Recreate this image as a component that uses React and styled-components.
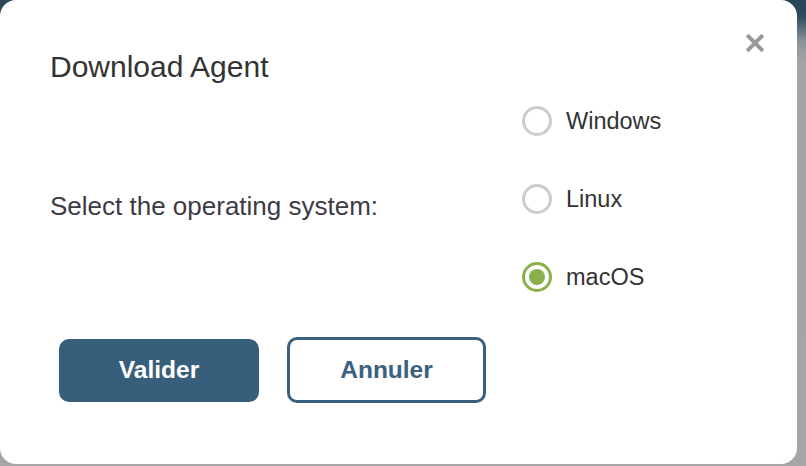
import React, { useState } from "react";
import styled, { createGlobalStyle } from "styled-components";

const Global = createGlobalStyle`
  html, body {
    margin: 0;
    padding: 0;
  }
  body {
    width: 806px;
    height: 466px;
    overflow: hidden;
    font-family: "Liberation Sans", Helvetica, Arial, sans-serif;
    background: linear-gradient(to bottom, #2a4558 0px, #2e4b5f 16px, #8b959c 42px, #a4a4a4 62px, #a5a5a5 100%);
  }
`;

const Modal = styled.div`
  position: relative;
  box-sizing: border-box;
  width: 797px;
  height: 464px;
  background: #ffffff;
  border-radius: 16px;
  padding: 50px 50px 0 50px;
  display: flex;
  flex-direction: column;
`;

const Title = styled.h2`
  margin: 0;
  font-size: 30px;
  line-height: 34px;
  font-weight: 400;
  color: #333333;
`;

const CloseButton = styled.button`
  position: absolute;
  top: 34px;
  right: 33px;
  width: 18px;
  height: 18px;
  padding: 0;
  border: none;
  background: none;
  cursor: pointer;
  display: flex;
`;

const Body = styled.div`
  margin-top: 22px;
  display: flex;
  align-items: center;
`;

const Label = styled.div`
  width: 472px;
  font-size: 26px;
  line-height: 30px;
  color: #3b3b44;
  padding-top: 13px;
`;

const RadioGroup = styled.div`
  display: flex;
  flex-direction: column;
  gap: 48px;
`;

const RadioRow = styled.label`
  display: flex;
  align-items: center;
  gap: 14px;
  height: 30px;
  cursor: pointer;
  font-size: 23.5px;
  color: #333333;
`;

const RadioCircle = styled.span`
  box-sizing: border-box;
  width: 30px;
  height: 30px;
  border-radius: 50%;
  border: 3px solid ${(p) => (p.$checked ? "#8bb04b" : "#cccccc")};
  display: flex;
  align-items: center;
  justify-content: center;
  &::after {
    content: "";
    width: 16px;
    height: 16px;
    border-radius: 50%;
    background: ${(p) => (p.$checked ? "#8bb04b" : "transparent")};
  }
`;

const Footer = styled.div`
  margin-top: 45px;
  padding-left: 9px;
  display: flex;
  align-items: center;
  gap: 28px;
`;

const Button = styled.button`
  box-sizing: border-box;
  width: ${(p) => (p.$primary ? "200px" : "199px")};
  height: ${(p) => (p.$primary ? "63px" : "66px")};
  border-radius: 10px;
  border: ${(p) => (p.$primary ? "none" : "3px solid #3a6180")};
  background: ${(p) => (p.$primary ? "#375e7b" : "#ffffff")};
  color: ${(p) => (p.$primary ? "#ffffff" : "#3a6180")};
  font-family: "Liberation Sans", Helvetica, Arial, sans-serif;
  font-weight: 700;
  font-size: 24.5px;
  cursor: pointer;
`;

const options = ["Windows", "Linux", "macOS"];

export default function App() {
  const [os, setOs] = useState("macOS");
  return (
    <>
      <Global />
      <Modal>
        <CloseButton aria-label="close">
          <svg width="18" height="18" viewBox="0 0 18 18">
            <path d="M2.5 2.5 L15.5 15.5 M15.5 2.5 L2.5 15.5" stroke="#9a9a9a" strokeWidth="4" strokeLinecap="square" />
          </svg>
        </CloseButton>
        <Title>Download Agent</Title>
        <Body>
          <Label>Select the operating system:</Label>
          <RadioGroup>
            {options.map((o) => (
              <RadioRow key={o} onClick={() => setOs(o)}>
                <RadioCircle $checked={os === o} />
                {o}
              </RadioRow>
            ))}
          </RadioGroup>
        </Body>
        <Footer>
          <Button $primary>Valider</Button>
          <Button>Annuler</Button>
        </Footer>
      </Modal>
    </>
  );
}
